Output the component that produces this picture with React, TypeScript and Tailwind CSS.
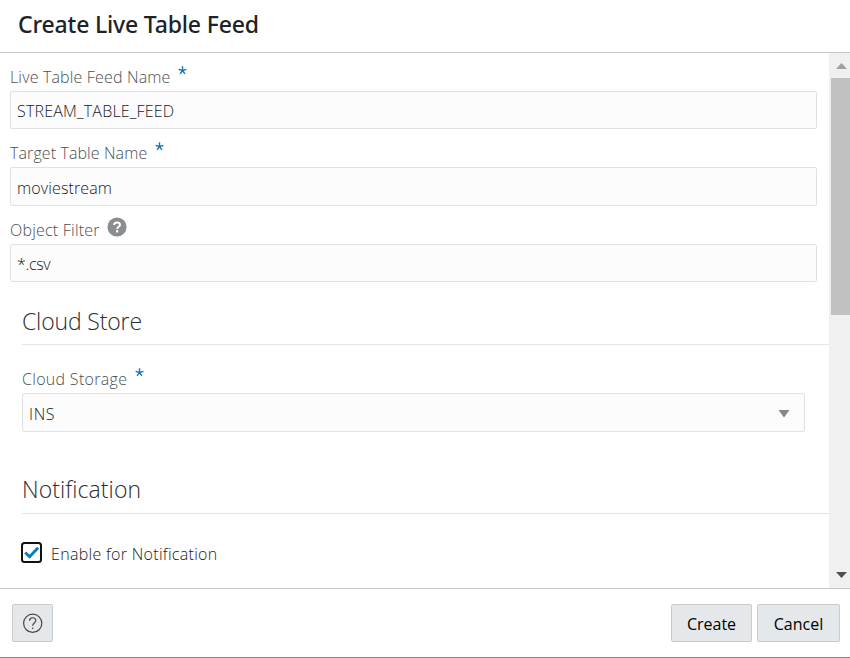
import React from "react";

function Label({ text, width, tracking, children }: { text: string; width: string; tracking: string; children?: React.ReactNode }) {
  return (
    <div className="flex h-[38px] items-start text-[16px] leading-[24px] font-light text-[#4c4f52]">
      <span className={`mt-[12px] block whitespace-nowrap ${width} ${tracking}`}>{text}</span>
      {children}
    </div>
  );
}

function Star() {
  return (
    <svg className="mt-[13px] ml-[7.5px] shrink-0" width="9" height="9" viewBox="0 0 9 9" stroke="#1b78b8" strokeWidth="1.4" fill="none">
      <path d="M4.5 4.5V.2M4.5 4.5L.6 3.3M4.5 4.5l3.9-1.2M4.5 4.5L2.1 7.8M4.5 4.5l2.4 3.3" />
    </svg>
  );
}

function Field({ value, height, tracking, children }: { value: string; height: string; tracking: string; children?: React.ReactNode }) {
  return (
    <div className={`flex items-center justify-between rounded-[2px] border border-[#dfe1e2] bg-[#fcfcfc] pt-[2px] pr-[14px] pl-[6px] text-[16px] leading-[24px] text-[#181a1c] ${height}`}>
      <span className={`whitespace-nowrap font-light ${tracking}`}>{value}</span>
      {children}
    </div>
  );
}

export default function App() {
  return (
    <div className="flex h-[658px] w-[850px] flex-col overflow-hidden border-b border-[#858585] bg-white font-['Open_Sans','Noto_Sans',sans-serif]">
      <header className="flex h-[53px] shrink-0 items-center border-b border-[#c4c6c8] pb-[3px] pl-[18px]">
        <h1 className="whitespace-nowrap font-['Noto_Sans','Open_Sans',sans-serif] text-[23px] font-medium tracking-[-0.18px] text-[#202326]">Create Live Table Feed</h1>
      </header>
      <div className="flex h-[535px] shrink-0">
        <main className="w-[829px]">
          <div className="pr-[12px] pl-[10px]">
            <Label text="Live Table Feed Name" width="w-[160px]" tracking="tracking-[0.16px]"><Star /></Label>
            <Field value="STREAM_TABLE_FEED" height="h-[38px]" tracking="tracking-[0.19px]" />
            <Label text="Target Table Name" width="w-[137px]" tracking="tracking-[0.1px]"><Star /></Label>
            <Field value="moviestream" height="h-[39px]" tracking="tracking-[0.13px]" />
            <Label text="Object Filter" width="w-[90px]" tracking="tracking-[0.22px]">
              <svg className="mt-[11px] ml-[6.5px]" width="20" height="20" viewBox="0 0 20 20">
                <circle cx="10" cy="10" r="9.6" fill="#8b8e90" />
                <path d="M7 7.9C7.1 4.6 13 4.6 13 7.7c0 2-2.8 2.2-2.8 4.2" fill="none" stroke="#fff" strokeWidth="2" />
                <rect x="9" y="13.2" width="2.2" height="2.2" fill="#fff" />
              </svg>
            </Label>
            <Field value="*.csv" height="h-[38px]" tracking="tracking-[-0.35px]" />
          </div>
          <section className="pl-[22px]">
            <h2 className="flex h-[63px] items-end border-b border-[#e2e4e5] pb-[7px] text-[23px] leading-[32px] font-light tracking-[-0.15px] text-[#2b2e31]">Cloud Store</h2>
            <div className="pt-[10px] pr-[24px]">
              <Label text="Cloud Storage" width="w-[105px]" tracking="tracking-[0.3px]"><Star /></Label>
              <Field value="INS" height="h-[39px]" tracking="tracking-[0.6px]">
                <svg width="12" height="8" viewBox="0 0 12 8"><path d="M.5 0h11L6 7.5z" fill="#85888b" /></svg>
              </Field>
            </div>
          </section>
          <section className="pl-[22px]">
            <h2 className="flex h-[82px] items-end border-b border-[#e2e4e5] pb-[8px] text-[23px] leading-[32px] font-light tracking-[0.08px] text-[#2b2e31]">Notification</h2>
            <label className="-ml-[1px] mt-[27px] flex h-[24px] items-center">
              <svg width="21" height="21" viewBox="0 0 21 21" className="mb-[2px] shrink-0">
                <rect x="1" y="1" width="19" height="19" rx="2.5" fill="#fff" stroke="#111" strokeWidth="2" />
                <path d="M4.2 10.5l4.4 4.3 8.5-9" fill="none" stroke="#087ccb" strokeWidth="2.9" />
              </svg>
              <span className="mt-[2px] ml-[9px] whitespace-nowrap text-[16px] font-light tracking-[0.3px] text-[#181a1c]">Enable for Notification</span>
            </label>
          </section>
        </main>
        <aside className="flex w-[21px] flex-col items-end justify-between bg-[#f0f0f0]">
          <div className="flex w-[19px] flex-col items-center">
            <svg className="mt-[10px] ml-[2px]" width="11" height="6" viewBox="0 0 11 6"><path d="M0 6L5.5 0 11 6z" fill="#a0a0a0" /></svg>
            <div className="mt-[9px] h-[237px] w-[19px] bg-[#c1c1c1]" />
          </div>
          <svg className="mr-[3px] mb-[10px]" width="11" height="6" viewBox="0 0 11 6"><path d="M0 0h11L5.5 6z" fill="#505050" /></svg>
        </aside>
      </div>
      <footer className="flex flex-1 items-start border-t border-[#c4c6c8] pt-[15px] pr-[10px] pl-[12px]">
        <button className="flex h-[38px] w-[41px] items-center justify-center rounded-[2px] border border-[#c7cbce] bg-[#e4e8ea]">
          <svg width="20" height="20" viewBox="0 0 20 20" fill="none" stroke="#454749" strokeWidth="1.2">
            <circle cx="9.7" cy="10.3" r="9.1" />
            <path d="M6.5 7.8c0-4 6.3-4 6.3-.4 0 2.6-3.1 2.5-3.1 5.3M9.7 14.6v1.4" />
          </svg>
        </button>
        <button className="ml-auto h-[38px] w-[81px] rounded-[2px] border border-[#c7cbce] bg-[#e4e8ea] pt-[2px] text-[16px] text-black">Create</button>
        <button className="ml-[5px] h-[38px] w-[83px] rounded-[2px] border border-[#c7cbce] bg-[#e4e8ea] pt-[2px] text-[16px] text-black">Cancel</button>
      </footer>
    </div>
  );
}
